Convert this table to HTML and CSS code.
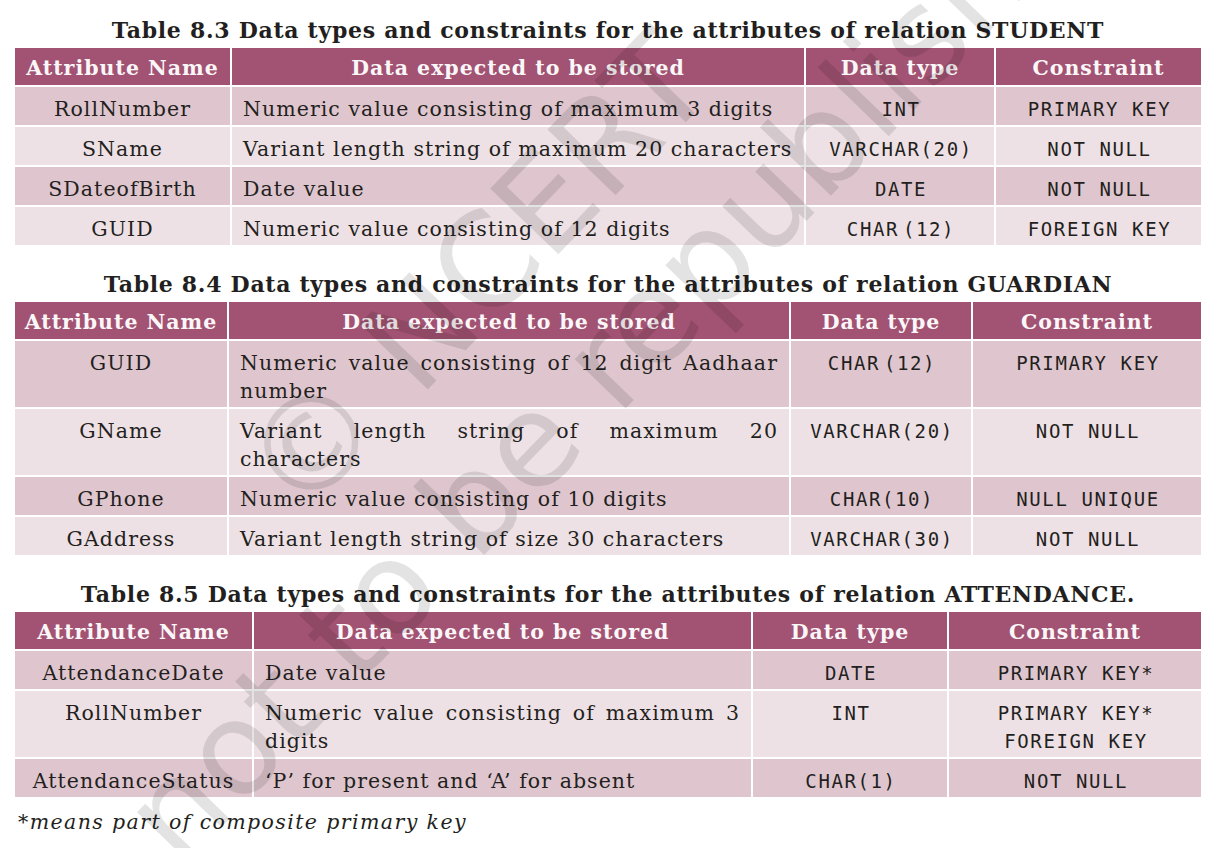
FILE: index.html
```html
<!DOCTYPE html>
<html lang="en">
<head>
<meta charset="utf-8">
<title>Data types and constraints</title>
<link rel="stylesheet" href="styles.css">
</head>
<body>
<main class="page">
  <section class="block">
    <h2 class="caption">Table 8.3 Data types and constraints for the attributes of relation STUDENT</h2>
    <table class="dt dt-student">
      <colgroup><col class="c1"><col class="c2"><col class="c3"><col class="c4"></colgroup>
      <thead>
        <tr><th>Attribute Name</th><th>Data expected to be stored</th><th>Data type</th><th>Constraint</th></tr>
      </thead>
      <tbody>
        <tr><td class="name">RollNumber</td><td class="desc">Numeric value consisting of maximum 3 digits</td><td class="code">INT</td><td class="code">PRIMARY KEY</td></tr>
        <tr><td class="name">SName</td><td class="desc">Variant length string of maximum 20 characters</td><td class="code">VARCHAR(20)</td><td class="code">NOT NULL</td></tr>
        <tr><td class="name">SDateofBirth</td><td class="desc">Date value</td><td class="code">DATE</td><td class="code">NOT NULL</td></tr>
        <tr><td class="name">GUID</td><td class="desc">Numeric value consisting of 12 digits</td><td class="code">CHAR<span class="paren">(12)</span></td><td class="code">FOREIGN KEY</td></tr>
      </tbody>
    </table>
  </section>

  <section class="block">
    <h2 class="caption">Table 8.4 Data types and constraints for the attributes of relation GUARDIAN</h2>
    <table class="dt dt-guardian">
      <colgroup><col class="c1"><col class="c2"><col class="c3"><col class="c4"></colgroup>
      <thead>
        <tr><th>Attribute Name</th><th>Data expected to be stored</th><th>Data type</th><th>Constraint</th></tr>
      </thead>
      <tbody>
        <tr><td class="name">GUID</td><td class="desc">Numeric value consisting of 12 digit Aadhaar number</td><td class="code">CHAR<span class="paren">(12)</span></td><td class="code">PRIMARY KEY</td></tr>
        <tr><td class="name">GName</td><td class="desc">Variant length string of maximum 20 characters</td><td class="code">VARCHAR(20)</td><td class="code">NOT NULL</td></tr>
        <tr><td class="name">GPhone</td><td class="desc">Numeric value consisting of 10 digits</td><td class="code">CHAR(10)</td><td class="code">NULL UNIQUE</td></tr>
        <tr><td class="name">GAddress</td><td class="desc">Variant length string of size 30 characters</td><td class="code">VARCHAR(30)</td><td class="code">NOT NULL</td></tr>
      </tbody>
    </table>
  </section>

  <section class="block">
    <h2 class="caption">Table 8.5 Data types and constraints for the attributes of relation ATTENDANCE.</h2>
    <table class="dt dt-attendance">
      <colgroup><col class="c1"><col class="c2"><col class="c3"><col class="c4"></colgroup>
      <thead>
        <tr><th>Attribute Name</th><th>Data expected to be stored</th><th>Data type</th><th>Constraint</th></tr>
      </thead>
      <tbody>
        <tr><td class="name">AttendanceDate</td><td class="desc">Date value</td><td class="code">DATE</td><td class="code">PRIMARY KEY*</td></tr>
        <tr><td class="name">RollNumber</td><td class="desc">Numeric value consisting of maximum 3 digits</td><td class="code">INT</td><td class="code">PRIMARY KEY*<br>FOREIGN KEY</td></tr>
        <tr><td class="name">AttendanceStatus</td><td class="desc">‘P’ for present and ‘A’ for absent</td><td class="code">CHAR(1)</td><td class="code">NOT NULL</td></tr>
      </tbody>
    </table>
    <p class="note">*means part of composite primary key</p>
  </section>

  <svg class="watermark" viewBox="0 0 1224 848" aria-hidden="true">
    <text class="wm-text" transform="translate(300 522) rotate(-46)">© NCERT</text>
    <text class="wm-text" transform="translate(180 870) rotate(-46)">not to be republished</text>
  </svg>
</main>
</body>
</html>
```

FILE: styles.css
```css
* {
  box-sizing: border-box;
}

html,
body {
  margin: 0;
  padding: 0;
  background: #ffffff;
}

body {
  font-family: "DejaVu Serif", "Liberation Serif", serif;
  color: #231f20;
}

.page {
  position: relative;
  width: 1224px;
  height: 848px;
  overflow: hidden;
  padding: 17px 0 0 15px;
}

.block + .block {
  margin-top: 24px;
}

.caption {
  margin: 0 0 5px;
  width: 1186px;
  text-align: center;
  font-size: 22px;
  line-height: 26px;
  letter-spacing: 0.7px;
  font-weight: bold;
  color: #231f20;
  white-space: nowrap;
}

.dt {
  width: 1186px;
  table-layout: fixed;
  border-collapse: separate;
  border-spacing: 0;
}

.dt th,
.dt td {
  border-right: 2px solid #ffffff;
  border-bottom: 2px solid #ffffff;
  line-height: 28px;
  vertical-align: top;
}

.dt th:last-child,
.dt td:last-child {
  border-right: 0;
}

.dt th {
  background: #a25272;
  color: #fbf7f8;
  font-size: 20.5px;
  letter-spacing: 1px;
  font-weight: bold;
  padding: 6px 2px 3px;
  text-align: center;
  white-space: nowrap;
}

.dt td {
  font-size: 20.5px;
  letter-spacing: 1.05px;
  padding: 8px 11px 2px;
}

.dt tbody tr:nth-child(odd) td {
  background: #dfc6ce;
}

.dt tbody tr:nth-child(even) td {
  background: #eee1e5;
}

.name {
  text-align: center;
  white-space: nowrap;
}

.desc {
  text-align: justify;
}

.dt-student .desc {
  padding-right: 4px;
}

.dt td.code {
  text-align: center;
  font-family: "DejaVu Sans Mono", "Liberation Mono", monospace;
  font-size: 19px;
  letter-spacing: 1.6px;
  padding-left: 4px;
  padding-right: 2px;
  white-space: nowrap;
}

.paren {
  margin-left: 4px;
}

.dt-student .c1 { width: 217px; }
.dt-student .c2 { width: 574px; }
.dt-student .c3 { width: 190px; }
.dt-student .c4 { width: 205px; }

.dt-guardian .c1 { width: 214px; }
.dt-guardian .c2 { width: 562px; }
.dt-guardian .c3 { width: 182px; }
.dt-guardian .c4 { width: 228px; }

.dt-attendance .c1 { width: 239px; }
.dt-attendance .c2 { width: 499px; }
.dt-attendance .c3 { width: 196px; }
.dt-attendance .c4 { width: 252px; }

.note {
  margin: 9px 0 0 3px;
  font-style: italic;
  font-size: 20.5px;
  letter-spacing: 1.4px;
  line-height: 28px;
}

.watermark {
  position: absolute;
  left: 0;
  top: 0;
  width: 1224px;
  height: 848px;
  pointer-events: none;
}

.wm-text {
  font-family: "DejaVu Sans", sans-serif;
  font-size: 130px;
  fill: rgba(0, 0, 0, 0.11);
}
```
